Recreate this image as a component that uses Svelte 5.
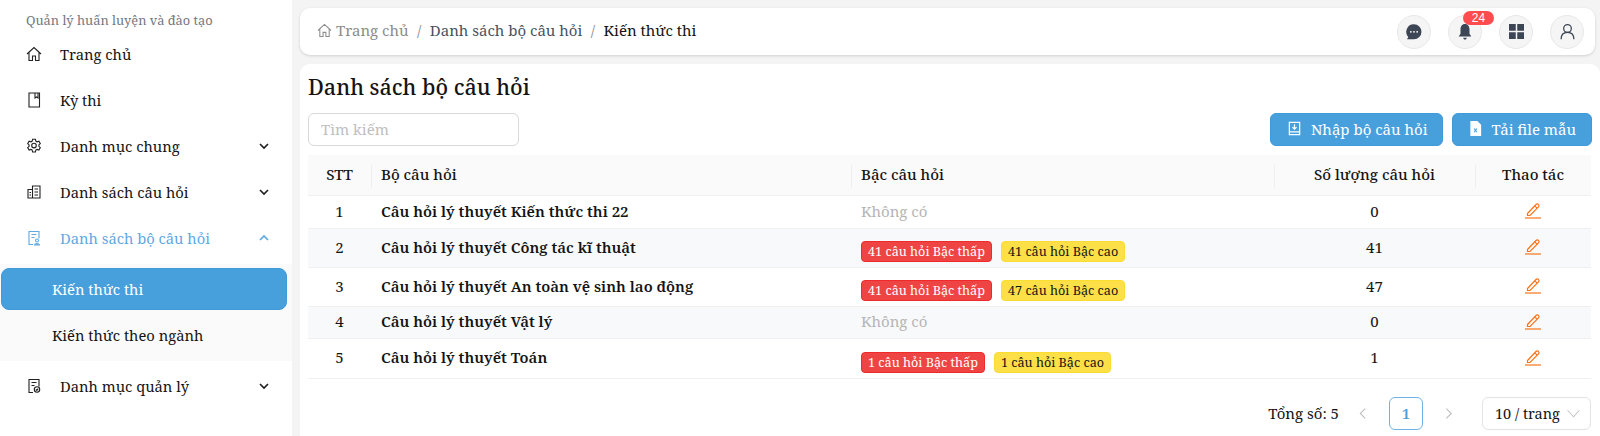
<script>
const rows = [
  { id: 1, name: 'Câu hỏi lý thuyết Kiến thức thi 22', low: 0, high: 0, total: 0, h: 'r33' },
  { id: 2, name: 'Câu hỏi lý thuyết Công tác kĩ thuật', low: 41, high: 41, total: 41, h: 'r39' },
  { id: 3, name: 'Câu hỏi lý thuyết An toàn vệ sinh lao động', low: 41, high: 47, total: 47, h: 'r39' },
  { id: 4, name: 'Câu hỏi lý thuyết Vật lý', low: 0, high: 0, total: 0, h: 'r32' },
  { id: 5, name: 'Câu hỏi lý thuyết Toán', low: 1, high: 1, total: 1, h: 'r40' }
];
</script>

<div class="shell">
  <aside class="side">
    <div class="brand">Quản lý huấn luyện và đào tạo</div>
    <div class="item">
      <svg class="ico" viewBox="0 0 16 16"><path d="M1 8 8 1.5 15 8M3 6.500V14.500h3.500V10h3v4.500H13V6.500" /></svg>
      <span>Trang chủ</span>
    </div>
    <div class="item">
      <svg class="ico" viewBox="0 0 16 16"><path d="M3 1h10.500v14H3zM9 1v5l1.500-1 1.500 1V1" /></svg>
      <span>Kỳ thi</span>
    </div>
    <div class="item">
      <svg class="ico" viewBox="0 0 16 16"><path d="M6.600 1.200h2.800l.4 1.900 1.200.7 1.900-.6 1.400 2.400-1.400 1.300v1.400l1.400 1.300-1.400 2.400-1.900-.6-1.200.7-.4 1.900H6.600l-.4-1.900-1.200-.7-1.900.6-1.400-2.400 1.400-1.300V6.900L1.700 5.600l1.400-2.400 1.900.6 1.200-.7z" /><circle cx="8" cy="7.600" r="2.300" /></svg>
      <span>Danh mục chung</span>
      <svg class="chev" viewBox="0 0 12 12"><path d="M2 4l4 4 4-4" /></svg>
    </div>
    <div class="item">
      <svg class="ico" viewBox="0 0 16 16"><path d="M6.500 2h7.500v12H6.500zM2 5.500h4.500V14H2zM8.500 5h3.500M8.500 8h3.500M8.500 11h3.500M3.500 8.500h1.500M3.500 11h1.500" /></svg>
      <span>Danh sách câu hỏi</span>
      <svg class="chev" viewBox="0 0 12 12"><path d="M2 4l4 4 4-4" /></svg>
    </div>
    <div class="item open">
      <svg class="ico" viewBox="0 0 16 16"><path d="M7 14.500H3V1.500h10v7M5.500 4.500h5M5.500 7.500h3" /><circle cx="11" cy="10.500" r="1.500" /><path d="M8.500 15c.3-1.800 4.700-1.800 5 0z" /></svg>
      <span>Danh sách bộ câu hỏi</span>
      <svg class="chev" viewBox="0 0 12 12"><path d="M2 8l4-4 4 4" /></svg>
    </div>
    <div class="sub">
      <div class="subitem active">Kiến thức thi</div>
      <div class="subitem">Kiến thức theo ngành</div>
    </div>
    <div class="item">
      <svg class="ico" viewBox="0 0 16 16"><path d="M7 14.500H3V1.500h10v7M5.500 4.500h5M5.500 7.500h3" /><circle cx="11" cy="11.500" r="2.700" /><path d="M9.800 11.500l1 1 1.400-1.800" /></svg>
      <span>Danh mục quản lý</span>
      <svg class="chev" viewBox="0 0 12 12"><path d="M2 4l4 4 4-4" /></svg>
    </div>
  </aside>

  <main class="main">
    <header class="topbar">
      <nav class="crumbs">
        <svg class="crumb-home" viewBox="0 0 16 16"><path d="M1 8 8 1.500 15 8M3 6.500V14.500h3.500V10h3v4.500H13V6.500" /></svg>
        <span class="c1">Trang chủ</span>
        <span class="slash">/</span>
        <span class="c2">Danh sách bộ câu hỏi</span>
        <span class="slash">/</span>
        <span class="c3">Kiến thức thi</span>
      </nav>
      <div class="tools">
        <button class="round" aria-label="Tin nhắn">
          <svg viewBox="0 0 20 20" width="18" height="18"><path fill="#3d4655" d="M10 1.500a8.300 8.300 0 0 1 0 16.600H2.200l1.500-2.600A8.300 8.300 0 0 1 10 1.500z" /><circle cx="6.500" cy="9.800" r="1" fill="#fff" /><circle cx="10" cy="9.800" r="1" fill="#fff" /><circle cx="13.500" cy="9.800" r="1" fill="#fff" /></svg>
        </button>
        <button class="round bell" aria-label="Thông báo">
          <svg viewBox="0 0 20 20" width="18" height="18"><path fill="#3d4655" d="M10 1c3.500 0 5 3 5 6v5l2 3H3l2-3V7c0-3 1.500-6 5-6z" /><path fill="#3d4655" d="M8 16.500h4a2 2 0 0 1-4 0z" /></svg>
          <span class="badge">24</span>
        </button>
        <button class="round" aria-label="Ứng dụng">
          <svg viewBox="0 0 16 16" width="15" height="15"><path fill="#3d4655" d="M0 0h7.200v7.200H0zM8.800 0H16v7.200H8.800zM0 8.800h7.200V16H0zM8.800 8.800H16V16H8.800z" /></svg>
        </button>
        <button class="round" aria-label="Tài khoản">
          <svg viewBox="0 0 20 20" width="17" height="17" fill="none" stroke="#3d4655" stroke-width="1.500"><circle cx="10" cy="6.500" r="4.500" /><path d="M2.500 19c0-5 3-8 7.500-8s7.500 3 7.500 8" /></svg>
        </button>
      </div>
    </header>

    <section class="card">
      <h1>Danh sách bộ câu hỏi</h1>
      <div class="bar">
        <input class="search" placeholder="Tìm kiếm" />
        <div class="actions">
          <button class="btn">
            <svg viewBox="0 0 16 16" width="15" height="15" fill="none" stroke="#fff" stroke-width="1.300"><path d="M2.500 1.500h11v13h-11zM2.500 11.500h11M8 3.500v5M5.800 6.500 8 8.700l2.200-2.200" /></svg>
            <span>Nhập bộ câu hỏi</span>
          </button>
          <button class="btn">
            <svg viewBox="0 0 16 16" width="15" height="15"><path fill="#fff" d="M2.500 0H10l4 4v12H2.500z" /><path stroke="#479fdc" stroke-width="1.200" d="M6.500 8l3 4M9.500 8l-3 4" /></svg>
            <span>Tải file mẫu</span>
          </button>
        </div>
      </div>

      <table>
        <colgroup>
          <col style="width:63px" /><col style="width:480px" /><col style="width:423px" /><col style="width:201px" /><col style="width:116px" />
        </colgroup>
        <thead>
          <tr>
            <th class="mid">STT</th>
            <th>Bộ câu hỏi</th>
            <th>Bậc câu hỏi</th>
            <th class="mid">Số lượng câu hỏi</th>
            <th class="mid">Thao tác</th>
          </tr>
        </thead>
        <tbody>
          {#each rows as row}
            <tr class={row.h}>
              <td class="mid">{row.id}</td>
              <td class="name">{row.name}</td>
              <td>
                {#if row.low || row.high}
                  <div class="tags">
                    <span class="tag red">{row.low} câu hỏi Bậc thấp</span>
                    <span class="tag yellow">{row.high} câu hỏi Bậc cao</span>
                  </div>
                {:else}
                  <span class="none">Không có</span>
                {/if}
              </td>
              <td class="mid">{row.total}</td>
              <td class="mid">
                <svg class="edit" viewBox="0 0 18 18"><path d="M3.500 12.500 12 3.500c.8-.8 1.800-.8 2.500-.1s.7 1.700 0 2.400L6 14.500H3.500zM10.800 4.800l2.500 2.500" /><path class="line" d="M1 17h16" /></svg>
              </td>
            </tr>
          {/each}
        </tbody>
      </table>

      <div class="pager">
        <span class="total">Tổng số: 5</span>
        <svg class="arrow" viewBox="0 0 10 10"><path d="M7.500 .5 3 5l4.500 4.500" /></svg>
        <span class="page">1</span>
        <svg class="arrow" viewBox="0 0 10 10"><path d="M3 .5 7.500 5 3 9.500" /></svg>
        <div class="size">10 / trang
          <svg viewBox="0 0 12 12" width="13" height="13" fill="none" stroke="#c4c4c4"><path d="M.5 3 6 9l5.500-6" /></svg>
        </div>
      </div>
    </section>
  </main>
</div>

<style>
  :global(body) {
    background: #f4f4f4;
    font-family: "Noto Serif", "DejaVu Serif", serif;
  }
  .shell {
    display: flex;
    height: 436px;
    overflow: hidden;
    color: #141414;
    font-size: 15px;
  }
  .side {
    width: 292px;
    flex: none;
    background: #fff;
    padding-top: 10px;
    box-sizing: border-box;
    font-size: 14.75px;
  }
  .brand {
    padding-left: 26px;
    height: 21px;
    line-height: 21px;
    font-size: 12.8px;
    color: #73787f;
  }
  .item {
    display: flex;
    align-items: center;
    height: 46px;
    padding: 0 22px 0 26px;
    gap: 18px;
  }
  .item span {
    flex: 1;
  }
  .ico {
    width: 16px;
    height: 16px;
    fill: none;
    stroke: #222;
    stroke-width: 1.1;
    flex: none;
  }
  .chev {
    width: 12px;
    height: 12px;
    fill: none;
    stroke: #222;
    stroke-width: 1.7;
  }
  .open {
    color: #5ea9e2;
  }
  .open .ico, .open .chev {
    stroke: #5ea9e2;
  }
  .sub {
    background: #fafafa;
    margin: 3px 0 2px;
    padding: 4px 5px 4px 1px;
  }
  .subitem {
    height: 42px;
    line-height: 40px;
    padding-left: 51px;
    border-radius: 8px;
    margin-bottom: 5px;
  }
  .subitem:last-child {
    margin-bottom: 0;
  }
  .active {
    background: #479fdc;
    border: 1px solid #3f9ad9;
    box-sizing: border-box;
    line-height: 40px;
    padding-left: 50px;
    color: #fff;
  }
  .main {
    flex: 1;
    min-width: 0;
    padding: 8px 0 0 8px;
  }
  .topbar {
    display: flex;
    align-items: center;
    justify-content: space-between;
    height: 47px;
    margin-right: 5px;
    padding: 0 11px 0 17px;
    background: #fff;
    border-radius: 10px;
    box-shadow: 0 1px 3px rgba(0, 0, 0, 0.15);
  }
  .crumbs {
    display: flex;
    align-items: center;
    margin-top: -3px;
  }
  .crumb-home {
    width: 15px;
    height: 15px;
    fill: none;
    stroke: #8c8c8c;
    stroke-width: 1.1;
    margin-right: 4px;
  }
  .c1 { color: #8c8c8c; }
  .c2 { color: #48525f; }
  .c3 { color: #141414; }
  .slash {
    color: #8c8c8c;
    margin: 0 8.5px;
  }
  .tools {
    display: flex;
    gap: 17px;
  }
  .round {
    position: relative;
    display: flex;
    align-items: center;
    justify-content: center;
    width: 34px;
    height: 34px;
    padding: 0;
    border: 1px solid #e8e8e8;
    border-radius: 50%;
    background: #f5f5f5;
  }
  .badge {
    position: absolute;
    top: -5px;
    left: 14px;
    width: 31px;
    height: 14px;
    line-height: 14px;
    border-radius: 7px;
    background: #ff4d4f;
    color: #fff;
    font-size: 12px;
  }
  .card {
    margin-top: 9px;
    height: 372px;
    padding: 12px 8px 0;
    background: #fff;
    border-radius: 10px 10px 0 0;
    box-sizing: border-box;
  }
  h1 {
    margin: 0;
    height: 37px;
    line-height: 22px;
    font-size: 21.5px;
    font-weight: 500;
  }
  .bar {
    display: flex;
    justify-content: space-between;
    height: 33px;
    margin-bottom: 9px;
  }
  .search {
    width: 211px;
    height: 33px;
    box-sizing: border-box;
    padding: 0 12px 2px;
    border: 1px solid #d9d9d9;
    border-radius: 6px;
    font: inherit;
  }
  .search::placeholder {
    color: #bfbfbf;
  }
  .actions {
    display: flex;
    gap: 9px;
  }
  .btn {
    display: flex;
    align-items: center;
    gap: 8px;
    height: 33px;
    padding: 0 15px 2px;
    border: 1px solid #3f9ad9;
    border-radius: 6px;
    background: #479fdc;
    color: #fff;
    font: inherit;
  }
  .btn:first-child {
    gap: 9px;
    padding-left: 16px;
  }
  table {
    width: 1283px;
    border-collapse: collapse;
    table-layout: fixed;
  }
  th {
    height: 40px;
    padding: 0 10px 2px;
    background: #fafafa;
    border-bottom: 1px solid #f0f0f0;
    font-weight: 500;
    text-align: left;
    position: relative;
    box-sizing: border-box;
  }
  th + th::before {
    content: "";
    position: absolute;
    left: 0;
    top: 10px;
    height: 23px;
    width: 1px;
    background: #efefef;
  }
  td {
    padding: 0 10px 2px;
    border-bottom: 1px solid #f0f0f0;
  }
  .mid {
    text-align: center;
  }
  .name {
    font-weight: 600;
  }
  .r33 { height: 33px; }
  .r39 { height: 39px; }
  .r32 { height: 32px; }
  .r40 { height: 40px; }
  tbody tr:nth-child(even) {
    background: #f8f9fb;
  }
  .none {
    color: #b5b5b5;
  }
  .tags {
    display: flex;
    gap: 9px;
    margin-top: 10px;
  }
  .tag {
    height: 21px;
    line-height: 19px;
    padding: 0 6px;
    box-sizing: border-box;
    border-radius: 4px;
    font-size: 12.65px;
  }
  .red {
    background: #ef4444;
    border: 1px solid #ee2a2a;
    color: #fff;
  }
  .yellow {
    background: #fde047;
    border: 1px solid #fbdc33;
  }
  .edit {
    display: block;
    width: 18px;
    height: 18px;
    margin: -1px auto 0;
    fill: none;
    stroke: #f97316;
    stroke-width: 1.2;
  }
  .pager {
    display: flex;
    align-items: center;
    justify-content: flex-end;
    margin-top: 18px;
    height: 33px;
    width: 1283px;
  }
  .total {
    margin-right: 18px;
  }
  .arrow {
    width: 11px;
    height: 11px;
    fill: none;
    stroke: #bfbfbf;
  }
  .page {
    width: 34px;
    height: 33px;
    margin: 0 20px 0 21px;
    box-sizing: border-box;
    border: 1px solid #6fb3e6;
    border-radius: 6px;
    text-align: center;
    line-height: 31px;
    font-weight: 600;
    color: #479fdc;
  }
  .size {
    display: flex;
    align-items: center;
    justify-content: space-between;
    width: 109px;
    height: 33px;
    margin-left: 28px;
    padding: 0 10px 0 12px;
    box-sizing: border-box;
    border: 1px solid #e3e3e3;
    border-radius: 6px;
    font-size: 14.5px;
  }
</style>
